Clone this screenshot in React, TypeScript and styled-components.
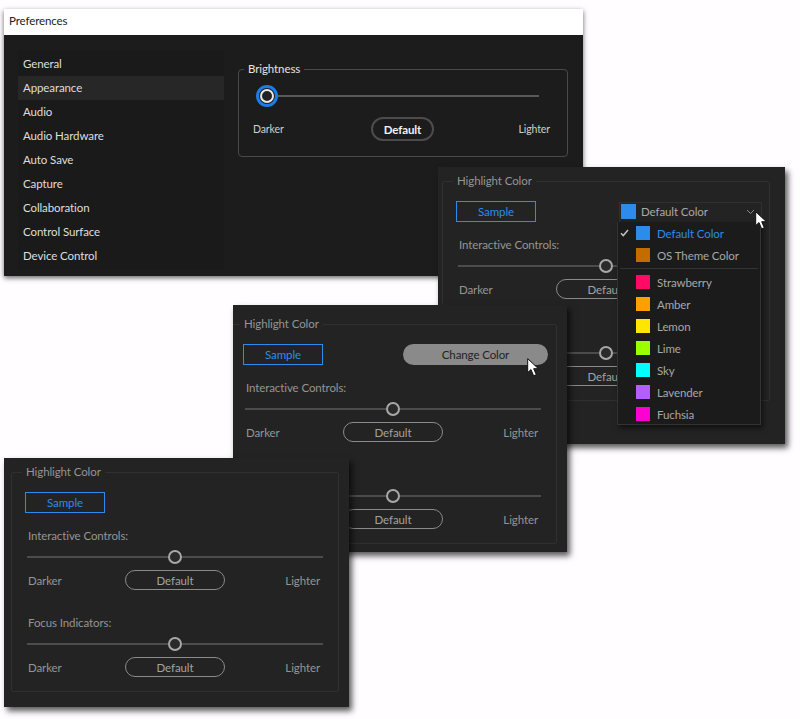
import React from "react";
import styled, { createGlobalStyle } from "styled-components";

const GlobalStyle = createGlobalStyle`
  html, body {
    margin: 0;
    padding: 0;
    background: #fffdff;
  }
  body {
    font-family: Lato, "Noto Sans", "Liberation Sans", sans-serif;
    font-size: 11.5px;
    letter-spacing: -0.1px;
  }
`;

const Canvas = styled.div`
  position: relative;
  width: 800px;
  height: 719px;
  overflow: hidden;
`;

type WindowBoxProps = {
  $x: number;
  $y: number;
  $w: number;
  $h: number;
  $pad: string;
};

// the screenshot is a collage, so each window sits at its own spot
const WindowBox = styled.section<WindowBoxProps>`
  position: absolute;
  left: ${(p) => p.$x}px;
  top: ${(p) => p.$y}px;
  width: ${(p) => p.$w}px;
  height: ${(p) => p.$h}px;
  padding: ${(p) => p.$pad};
  box-sizing: border-box;
  background: #232323;
  box-shadow: 3px 4px 6px rgba(0, 0, 0, 0.65);
  overflow: hidden;
`;

const PrefsWindow = styled.section`
  position: absolute;
  left: 4px;
  top: 9px;
  width: 579px;
  height: 267px;
  display: flex;
  flex-direction: column;
  background: #1c1c1c;
  box-shadow: 0 2px 5px rgba(0, 0, 0, 0.6);
`;

const TitleBar = styled.header`
  flex: 0 0 26px;
  display: flex;
  align-items: center;
  padding: 0 0 4px 5px;
  box-sizing: border-box;
  background: #fff;
  color: #222;
`;

const PrefsBody = styled.div`
  flex: 1;
  display: flex;
  gap: 14px;
  padding: 15px 15px 0 14px;
`;

const Sidebar = styled.nav`
  flex: 0 0 206px;
  height: 220px;
  padding-top: 2px;
  box-sizing: border-box;
  background: #1a1a1a;
`;

const SidebarItem = styled.div<{ $active?: boolean }>`
  height: 24px;
  line-height: 24px;
  padding-left: 5px;
  color: #dedede;
  background: ${(p) => (p.$active ? "#272727" : "transparent")};
`;

const BrightnessGroup = styled.fieldset`
  width: 330px;
  height: 96px;
  margin: 11px 0 0;
  padding: 0;
  box-sizing: border-box;
  border: 1px solid #494949;
  border-radius: 4px;
`;

const BrightnessLegend = styled.legend`
  margin-left: 5px;
  padding: 0 4px;
  line-height: 16px;
  color: #e4e4e4;
`;

const BrightnessTrack = styled.div`
  position: relative;
  height: 2px;
  margin: 18px 28px 0 28px;
  background: #595959;
`;

const BrightnessThumb = styled.div`
  position: absolute;
  left: -11px;
  top: -10px;
  width: 22px;
  height: 22px;
  box-sizing: border-box;
  border-radius: 50%;
  border: 3px solid #1d7ce6;
  background: #1b1b1b;
  display: flex;
  align-items: center;
  justify-content: center;

  &::after {
    content: "";
    width: 10px;
    height: 10px;
    border-radius: 50%;
    border: 2px solid #e8e8e8;
    background: #222;
  }
`;

const BrightnessRow = styled.div`
  display: grid;
  grid-template-columns: 1fr 63px 1fr;
  align-items: center;
  margin: 20px 15px 0 14px;
  color: #cfcfcf;
  font-size: 10.5px;
`;

const BrightnessDefault = styled.div`
  height: 24px;
  box-sizing: border-box;
  border: 2px solid #4c4c4c;
  border-radius: 12px;
  display: flex;
  align-items: center;
  justify-content: center;
  color: #f2f2f2;
  font-size: 11.5px;
  font-weight: 700;
`;

const Group = styled.fieldset`
  width: 328px;
  margin: 0;
  padding: 0 0 14px;
  box-sizing: border-box;
  border: 1px solid #303030;
  border-radius: 2px;
`;

const GroupLegend = styled.legend`
  margin-left: 10px;
  padding: 0 4px;
  line-height: 16px;
  color: #959595;
`;

const SampleRow = styled.div`
  display: flex;
  align-items: center;
  justify-content: space-between;
  height: 21px;
  margin: 12px 0 0 13px;
`;

const SampleBox = styled.div`
  width: 80px;
  height: 21px;
  box-sizing: border-box;
  border: 1px solid #2d8ceb;
  color: #2d8ceb;
  display: flex;
  align-items: center;
  justify-content: center;
`;

const ControlBlock = styled.div<{ $first?: boolean }>`
  margin: ${(p) => (p.$first ? "15px" : "25px")} 15px 0 15px;
`;

const ControlLabel = styled.div`
  height: 16px;
  line-height: 16px;
  margin-left: 1px;
  color: #959595;
`;

const SliderTrack = styled.div`
  height: 16px;
  margin-top: 5px;
  display: flex;
  align-items: center;

  &::before,
  &::after {
    content: "";
    flex: 1;
    height: 2px;
    background: #4c4c4c;
  }
`;

const SliderThumb = styled.div`
  flex: 0 0 14px;
  height: 14px;
  box-sizing: border-box;
  border: 2px solid #a8a8a8;
  border-radius: 50%;
  background: #2a2a2a;
`;

const ControlRow = styled.div`
  display: grid;
  grid-template-columns: 1fr 100px 1fr;
  align-items: center;
  margin: 5px 1px 0 1px;
  color: #959595;
`;

const RightLabel = styled.span`
  text-align: right;
  padding-right: 2px;
`;

const PillButton = styled.div`
  height: 20px;
  box-sizing: border-box;
  border: 1px solid #8a8a8a;
  border-radius: 10px;
  display: flex;
  align-items: center;
  justify-content: center;
  color: #a2a2a2;
`;

const ChangeColor = styled.div`
  width: 145px;
  height: 21px;
  margin-right: 8px;
  border-radius: 11px;
  background: #8a8a8a;
  color: #222;
  display: flex;
  align-items: center;
  justify-content: center;
`;

const ColorTrigger = styled.div`
  width: 143px;
  height: 20px;
  margin: 0 7px 0 0;
  padding: 0 6px 1px 1px;
  box-sizing: border-box;
  border: 1px solid #303030;
  border-bottom: none;
  display: flex;
  align-items: center;
  gap: 5px;
  color: #a8a8a8;
`;

const TriggerLabel = styled.span`
  flex: 1;
`;

const Swatch = styled.span<{ $color: string; $size: number }>`
  flex: 0 0 ${(p) => p.$size}px;
  height: ${(p) => p.$size}px;
  background: ${(p) => p.$color};
`;

const ColorMenu = styled.div`
  position: absolute;
  left: 179px;
  top: 55px;
  width: 144px;
  height: 203px;
  box-sizing: border-box;
  background: #1b1b1b;
  border: 1px solid #343434;
  border-top: none;
  box-shadow: 2px 3px 5px rgba(0, 0, 0, 0.55);
`;

const MenuItem = styled.div<{ $selected?: boolean }>`
  height: 22px;
  display: grid;
  grid-template-columns: 11px 14px 1fr;
  column-gap: 7px;
  align-items: center;
  color: ${(p) => (p.$selected ? "#2d8ceb" : "#a8a8a8")};
`;

const CheckSlot = styled.span`
  display: flex;
  justify-content: flex-end;
`;

const MenuDivider = styled.div`
  height: 1px;
  margin: 2px;
  background: #333;
`;

const PointerSlot = styled.div<{ $x: number; $y: number }>`
  position: absolute;
  left: ${(p) => p.$x}px;
  top: ${(p) => p.$y}px;
  line-height: 0;
`;

// the middle window crops the left edge of its group
const ClippedLeft = styled.div`
  margin-left: -4px;
`;

const Pointer = ({ x, y }: { x: number; y: number }) => (
  <PointerSlot $x={x} $y={y}>
    <svg width="13" height="19" viewBox="0 0 13 19">
      <path
        d="M0.7 0.7 L0.7 14.6 L4 11.6 L6.6 17.8 L9.3 16.7 L6.7 10.7 L11.4 10.7 Z"
        fill="#fff"
        stroke="#111"
        strokeWidth="1"
        strokeLinejoin="round"
      />
    </svg>
  </PointerSlot>
);

const ChevronDown = () => (
  <svg width="9" height="6" viewBox="0 0 9 6">
    <path d="M1 1 L4.5 4.5 L8 1" fill="none" stroke="#8a8a8a" strokeWidth="1" />
  </svg>
);

const CheckMark = () => (
  <svg width="9" height="8" viewBox="0 0 9 8">
    <path d="M1 4.2 L3.3 6.6 L8 1" fill="none" stroke="#c0c0c0" strokeWidth="1.5" />
  </svg>
);

const sections = ["General", "Appearance", "Audio", "Audio Hardware", "Auto Save", "Capture", "Collaboration", "Control Surface", "Device Control"];

const themeColors = [
  { name: "Default Color", color: "#2d8ceb", selected: true },
  { name: "OS Theme Color", color: "#c46c00" },
];

const accentColors = [
  { name: "Strawberry", color: "#ff0a64" },
  { name: "Amber", color: "#ff9f00" },
  { name: "Lemon", color: "#ffe600" },
  { name: "Lime", color: "#9cff00" },
  { name: "Sky", color: "#00ffff" },
  { name: "Lavender", color: "#b45eff" },
  { name: "Fuchsia", color: "#ff00d2" },
];

const Control = ({ label, first }: { label: string; first?: boolean }) => (
  <ControlBlock $first={first}>
    <ControlLabel>{label}</ControlLabel>
    <SliderTrack>
      <SliderThumb />
    </SliderTrack>
    <ControlRow>
      <span>Darker</span>
      <PillButton>Default</PillButton>
      <RightLabel>Lighter</RightLabel>
    </ControlRow>
  </ControlBlock>
);

const HighlightGroup = ({ action }: { action?: React.ReactNode }) => (
  <Group>
    <GroupLegend>Highlight Color</GroupLegend>
    <SampleRow>
      <SampleBox>Sample</SampleBox>
      {action}
    </SampleRow>
    <Control label="Interactive Controls:" first />
    <Control label="Focus Indicators:" />
  </Group>
);

const MenuRow = ({ name, color, selected }: { name: string; color: string; selected?: boolean }) => (
  <MenuItem $selected={selected}>
    <CheckSlot>{selected && <CheckMark />}</CheckSlot>
    <Swatch $color={color} $size={14} />
    <span>{name}</span>
  </MenuItem>
);

export default function App() {
  return (
    <Canvas>
      <GlobalStyle />
      <PrefsWindow>
        <TitleBar>Preferences</TitleBar>
        <PrefsBody>
          <Sidebar>
            {sections.map((name) => (
              <SidebarItem key={name} $active={name === "Appearance"}>
                {name}
              </SidebarItem>
            ))}
          </Sidebar>
          <BrightnessGroup>
            <BrightnessLegend>Brightness</BrightnessLegend>
            <BrightnessTrack>
              <BrightnessThumb />
            </BrightnessTrack>
            <BrightnessRow>
              <span>Darker</span>
              <BrightnessDefault>Default</BrightnessDefault>
              <RightLabel>Lighter</RightLabel>
            </BrightnessRow>
          </BrightnessGroup>
        </PrefsBody>
      </PrefsWindow>

      <WindowBox $x={438} $y={167} $w={347} $h={277} $pad="6px 0 0 4px">
        <HighlightGroup
          action={
            <ColorTrigger>
              <Swatch $color="#2d8ceb" $size={15} />
              <TriggerLabel>Default Color</TriggerLabel>
              <ChevronDown />
            </ColorTrigger>
          }
        />
        <ColorMenu>
          {themeColors.map((c) => (
            <MenuRow key={c.name} {...c} />
          ))}
          <MenuDivider />
          {accentColors.map((c) => (
            <MenuRow key={c.name} {...c} />
          ))}
        </ColorMenu>
        <Pointer x={317} y={44} />
      </WindowBox>

      <WindowBox $x={233} $y={305} $w={334} $h={247} $pad="11px 0 0 0">
        <ClippedLeft>
          <HighlightGroup action={<ChangeColor>Change Color</ChangeColor>} />
        </ClippedLeft>
        <Pointer x={294} y={53} />
      </WindowBox>

      <WindowBox $x={4} $y={458} $w={345} $h={249} $pad="6px 0 0 7px">
        <HighlightGroup />
      </WindowBox>
    </Canvas>
  );
}
